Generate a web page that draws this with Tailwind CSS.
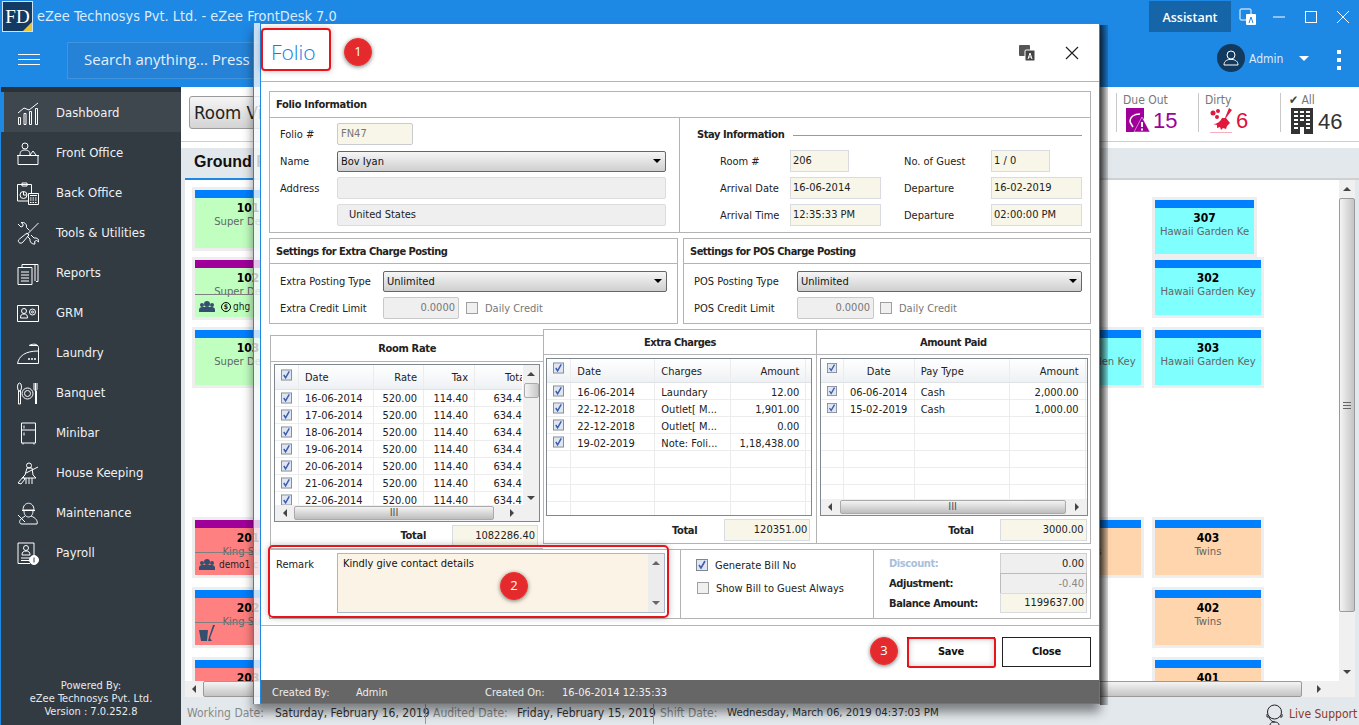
<!DOCTYPE html>
<html lang="en">
<head>
<meta charset="UTF-8">
<title>eZee FrontDesk - Folio</title>
<script src="https://cdn.jsdelivr.net/npm/@tailwindcss/browser@4"></script>
</head>
<body class="relative w-[1359px] h-[725px] overflow-hidden bg-[#e3e8ec] font-['DejaVu_Sans_Condensed','DejaVu_Sans',sans-serif] text-[11px] text-[#111]">

<svg class="hidden">
  <symbol id="chk" viewBox="0 0 12 12"><rect x=".5" y=".5" width="11" height="11" fill="#dfe6f2" stroke="#7f8790"/><path d="M3 6l2 3 4-7" fill="none" stroke="#3b5db0" stroke-width="1.6"/></symbol>
  <symbol id="unchk" viewBox="0 0 12 12"><rect x=".5" y=".5" width="11" height="11" fill="#f0f0f0" stroke="#a0a0a0"/></symbol>
</svg>

<!-- top bar -->
<header class="h-[87px] bg-[#1e88e5] text-white">
  <div class="h-[33px] flex items-center">
    <div class="relative ml-[2px] w-[31px] h-[31px] bg-[#123a63] border border-[#cfe3f5] flex items-center justify-center font-['Liberation_Serif',serif] text-[19px] leading-none overflow-hidden">FD
      <div class="absolute right-0 bottom-0 w-0 h-0 border-l-[9px] border-l-transparent border-b-[9px] border-b-[#e8c53a]"></div>
    </div>
    <span class="ml-[4px] text-[14.4px] text-[#dcebf9] w-[1100px]">eZee Technosys Pvt. Ltd. - eZee FrontDesk 7.0</span>
    <div class="absolute left-[1149px] top-[1px] w-[82px] h-[31px] pt-[3px] bg-[#1565a8] flex items-center justify-center font-['Open_Sans',sans-serif] font-semibold text-[12.5px]">Assistant</div>
    <svg class="absolute left-[1239px] top-[8px] w-[18px] h-[18px]" viewBox="0 0 18 18"><rect x="1" y="1" width="11" height="11" rx="1" fill="none" stroke="#fff"/><rect x="7" y="6" width="10" height="11" rx="1" fill="#fff"/><path d="M10 15l2-6 2 6" fill="none" stroke="#1e88e5"/></svg>
    <svg class="absolute left-[1273px] top-[11px] w-[12px] h-[12px]" viewBox="0 0 12 12"><path d="M0 6h12" stroke="#fff"/></svg>
    <div class="absolute left-[1305px] top-[11px] w-[12px] h-[12px] border border-white"></div>
    <svg class="absolute left-[1337px] top-[11px] w-[12px] h-[12px]" viewBox="0 0 12 12"><path d="M0 0l12 12M12 0L0 12" stroke="#fff"/></svg>
  </div>
  <div class="h-[54px] flex items-center">
    <svg class="ml-[18px] w-[22px] h-[12px]" viewBox="0 0 22 12"><path d="M0 .5h22M0 5.5h22M0 10.5h22" stroke="#fff"/></svg>
    <div class="ml-[27px] w-[200px] h-[37px] pb-[2px] bg-[#2582d6] border border-[#3f95e0] flex items-center pl-[16px] font-['Open_Sans',sans-serif] text-[15px] whitespace-nowrap text-[#e4f0fb]">Search anything... Press</div>
    <div class="absolute left-[1217px] top-[44px] w-[28px] h-[28px] rounded-full bg-[#12395e] flex items-center justify-center">
      <svg class="w-[18px] h-[18px]" viewBox="0 0 18 18" fill="none" stroke="#fff"><circle cx="9" cy="6" r="4"/><path d="M2 16c0-4 3-5 5-5.500h4c2 .5 5 1.500 5 5.500z"/></svg>
    </div>
    <span class="absolute left-[1249px] top-[50px] text-[12px] text-[#dcebf9]">Admin</span>
    <div class="absolute left-[1299px] top-[56px] w-0 h-0 border-x-[5px] border-x-transparent border-t-[5px] border-t-white"></div>
    <div class="absolute left-[1337px] top-[50px] flex flex-col gap-[4px]">
      <i class="block w-[4px] h-[4px] bg-white"></i><i class="block w-[4px] h-[4px] bg-white"></i><i class="block w-[4px] h-[4px] bg-white"></i>
    </div>
  </div>
</header>

<div class="flex h-[638px]">
  <!-- sidebar -->
  <aside class="relative w-[181px] bg-[#323a42] border-l border-[#1e88e5] text-[13px] text-[#eef2f5] [&>a]:pt-[2px]">
    <div class="h-[5px] bg-[#2b3138]"></div>
    <a class="flex items-center h-[40px] -ml-[1px] border-l-4 border-[#1e88e5] bg-[#3e464e] pl-[13px] gap-[17px]">
      <svg class="w-[22px] h-[23px]" viewBox="0 0 22 23" fill="none" stroke="#fff"><path d="M1.500 15.500h2v7h-2zM7 11.500h2v11H7zM12.500 9.500h2v13h-2zM18.500 6.500h2v16h-2zM1 11l6-5 5 2 9-7"/></svg>Dashboard</a>
    <a class="flex items-center h-[40px] pl-[16px] gap-[17px]">
      <svg class="w-[22px] h-[23px]" viewBox="0 0 22 23" fill="none" stroke="#fff"><circle cx="8" cy="4" r="3"/><path d="M3 13c0-4 2-5 5-5s5 1 5 5M13 13l3-4 3 4M1 22.500V13.500h20v9zM0 13.500h22" /></svg>Front Office</a>
    <a class="flex items-center h-[40px] pl-[16px] gap-[17px]">
      <svg class="w-[22px] h-[23px]" viewBox="0 0 22 23" fill="none" stroke="#fff"><path d="M12 19H.5V2.500h14V11M5 1h5v3H5z"/><circle cx="6.500" cy="13" r="3.500"/><path d="M6.500 13V9.500M6.500 13h3"/><path d="M11.500 11.500h10v11h-10zM13 13.500h7" /><path d="M13 16h7M13 18h7M13 20.500h7" stroke-dasharray="1.500 1"/></svg>Back Office</a>
    <a class="flex items-center h-[40px] pl-[16px] gap-[17px]">
      <svg class="w-[22px] h-[23px]" viewBox="0 0 22 23" fill="none" stroke="#fff"><path d="M21.500 1L10 12.500M10 11l2 2-6 7c-1 1.500-3 1.500-4 .5s-1-2.500 .5-3.500z"/><path d="M1 2l3 3 2-1 0-2-2-1.500c3-.5 6 1 5.500 5l3 3M14 13l3 3c3-.5 5 1 5 4l-2.500-1.500-2 1 .5 2.500c-3 .5-5.500-2-5-5L10 14" /></svg>Tools &amp; Utilities</a>
    <a class="flex items-center h-[40px] pl-[16px] gap-[17px]">
      <svg class="w-[22px] h-[23px]" viewBox="0 0 22 23" fill="none" stroke="#fff"><path d="M18 2.500h3v17h-2M5 5V2.500h13V19"/><path d="M1 5.500h14l0 17H1zM4 10h8M4 13h8M4 16h8M4 19h8"/></svg>Reports</a>
    <a class="flex items-center h-[40px] pl-[16px] gap-[17px]">
      <svg class="w-[22px] h-[23px]" viewBox="0 0 22 23" fill="none" stroke="#fff"><path d="M.5 3.500h21v16h-21z"/><circle cx="7" cy="9" r="2.500"/><path d="M3.500 16c0-3 1-4 3.500-4s3.500 1 3.500 4zM13 3.500h0"/><circle cx="15.500" cy="10" r="3"/><circle cx="15.500" cy="10" r="1"/></svg>GRM</a>
    <a class="flex items-center h-[40px] pl-[16px] gap-[17px]">
      <svg class="w-[22px] h-[23px]" viewBox="0 0 22 23" fill="none" stroke="#fff"><path d="M21.500 21.500H.5C2 14 8 9 21.500 9zM12 3.500c4-2 9-2 9.500 2V9M13 3.500h8" /><path d="M11 17h2M14 17h2M17 17h2" stroke-width="1.500"/></svg>Laundry</a>
    <a class="flex items-center h-[40px] pl-[16px] gap-[17px]">
      <svg class="w-[22px] h-[23px]" viewBox="0 0 22 23" fill="none" stroke="#fff"><ellipse cx="2.500" cy="5" rx="2" ry="4"/><path d="M1.500 9h2v13h-2zM17 1v6c0 2 3 2 3 0V1M18.500 1v21M18 9h1.500v13" /><circle cx="10.500" cy="11.500" r="5.500"/><circle cx="10.500" cy="11.500" r="3"/></svg>Banquet</a>
    <a class="flex items-center h-[40px] pl-[16px] gap-[17px]">
      <svg class="w-[22px] h-[23px]" viewBox="0 0 22 23" fill="none" stroke="#fff"><path d="M4.500 1h14v20h-14zM4.500 8h14M7 3.500v3M7 10.500v3M6 21v1.500M17 21v1.500"/></svg>Minibar</a>
    <a class="flex items-center h-[40px] pl-[16px] gap-[17px]">
      <svg class="w-[22px] h-[23px]" viewBox="0 0 22 23" fill="none" stroke="#fff"><circle cx="12" cy="3.500" r="2.500"/><path d="M10 6l-2 7-3 3h14l-3-3-1-7zM21 5L9 11M1 21l5-6 2 2-4 5zM9 16v6M12 16v6M15 16v6"/></svg>House Keeping</a>
    <a class="flex items-center h-[40px] pl-[16px] gap-[17px]">
      <svg class="w-[22px] h-[23px]" viewBox="0 0 22 23" fill="none" stroke="#fff"><path d="M6 8c0-9 11-9 11 0zM5 8.500h13M7 9c0 8 9 8 9 0M8 14l-4 3c-2 2-2 5 1 5h15c1-3-1-6-6-8M1 13l7 7"/></svg>Maintenance</a>
    <a class="flex items-center h-[40px] pl-[16px] gap-[17px]">
      <svg class="w-[22px] h-[23px]" viewBox="0 0 22 23" fill="none" stroke="#fff"><path d="M13 21.500H1V1h16v14"/><circle cx="9" cy="6" r="2.500"/><path d="M5 13c0-3 1.500-4 4-4s4 1 4 4zM4 16h9M4 18.500h8"/><circle cx="17" cy="18" r="4.500" fill="#fff"/><path d="M17 15.500v5" stroke="#323a42"/></svg>Payroll</a>
    <div class="absolute left-0 right-0 top-[592px] text-center text-[11px] leading-[13px] text-[#e6eaee]">Powered By:<br>eZee Technosys Pvt. Ltd.<br>Version : 7.0.252.8</div>
  </aside>

  <!-- main -->
  <main class="w-[1178px] flex flex-col">
    <div class="relative h-[61px] bg-white">
      <div class="h-[55px] border-b border-[#cfcfcf] flex items-start">
        <div class="ml-[8px] mt-[9px] w-[80px] h-[33px] rounded-[3px] border border-[#9a9a9a] bg-linear-to-b from-[#f5f5f5] to-[#d4d4d4] text-[18.5px] leading-[31px] pl-[4px] text-[#222] whitespace-nowrap overflow-hidden">Room View</div>
        <div class="ml-[847px] mt-[6px] pt-[1px] h-[39px] border-l border-[#c8c8c8] w-[82px] pl-[6px] text-[#777] text-[12px] leading-[13px]">Due Out
          <div class="flex items-center gap-[3px] pl-[3px] mt-[1px]">
            <svg class="w-[24px] h-[25px]" viewBox="0 0 24 25"><path d="M0 0h18v10l-4 7-3 7H0z" fill="#a0009a"/><path d="M4 14c0-5 4-8 10-8" fill="none" stroke="#fff" stroke-width="1.500"/><path d="M4 14l3 5" stroke="#fff" stroke-width="1.500"/><path d="M16 9l8 15H8z" fill="#a0009a" stroke="#fff" stroke-width=".5"/><path d="M16 14v5M16 20.500v2" stroke="#fff" stroke-width="2"/></svg>
            <span class="font-['Liberation_Sans',sans-serif] text-[22px] leading-[25px] text-[#a0009a]">15</span>
          </div>
        </div>
        <div class="mt-[6px] pt-[1px] h-[39px] border-l border-[#c8c8c8] w-[82px] pl-[6px] text-[#777] text-[12px] leading-[13px]">Dirty
          <div class="flex items-center gap-[4px] pl-[5px] mt-[1px]">
            <svg class="w-[22px] h-[25px]" viewBox="0 0 22 25" fill="#e0183c"><circle cx="3" cy="5" r="2.500"/><circle cx="8" cy="3" r="2"/><circle cx="7" cy="9" r="2"/><path d="M19 0l3 2-6 8 4 5-3 3-1 3-3-1-2 2-1-3-3 1 0-3-4-1c4 0 7-2 9-6l3 0z"/><path d="M0 24.500h22" stroke="#f4b0bc"/></svg>
            <span class="font-['Liberation_Sans',sans-serif] text-[22px] leading-[25px] text-[#e0103a]">6</span>
          </div>
        </div>
        <div class="mt-[6px] pt-[1px] h-[39px] border-l border-[#c8c8c8] pl-[8px] text-[#777] text-[12px] leading-[13px]"><span class="text-[#444]">&#10004;</span> All
          <div class="flex items-center gap-[5px] pl-[2px] mt-[1px]">
            <svg class="w-[22px] h-[26px]" viewBox="0 0 22 26"><rect width="22" height="26" fill="#333"/><path d="M3 4h4M9 4h4M15 4h4M3 8h4M9 8h4M15 8h4M3 12h4M9 12h4M15 12h4M3 16h4M15 16h4M3 20h4M15 20h4" stroke="#fff" stroke-width="2"/><rect x="9" y="19" width="4" height="7" fill="#fff"/></svg>
            <span class="font-['Liberation_Sans',sans-serif] text-[22px] leading-[25px] text-[#333]">46</span>
          </div>
        </div>
      </div>
    </div>
    <div class="h-[30px] ml-[4px] text-[16px] leading-[28px] font-bold pl-[9px] text-[#111] font-['Liberation_Sans',sans-serif]">Ground Floor</div>
    <div class="ml-[4px] h-[2px] bg-[#d0d0d0]"><div class="w-[70px] h-[2px] bg-[#1e88e5]"></div></div>

    <div class="relative ml-[4px] mr-[4px] h-[501px] bg-white flex overflow-hidden">
      <div class="ml-[10px] mt-[10px] w-[106px] text-center text-[11.2px] leading-[13px] text-[#666]">
        <div class="h-[58px] bg-[#c0ffc0] shadow-[0_0_0_3px_#eee]"><div class="h-[8px] bg-[#007fff]"></div><b class="block mt-[4px] text-[12px] text-black">101</b>Super Deluxe</div>
        <div class="relative mt-[12px] h-[57px] bg-[#c0ffc0] shadow-[0_0_0_3px_#eee]"><div class="h-[8px] bg-[#a0009a]"></div><b class="block mt-[4px] text-[12px] text-black">102</b>Super Deluxe
          <div class="absolute left-0 right-0 top-[34px] h-px bg-[#808080]"></div>
          <div class="absolute left-[4px] top-[40px] flex items-center text-[10px] text-[#222]"><svg class="w-[16px] h-[11px]" viewBox="0 0 16 11" fill="#34506e"><circle cx="8" cy="3" r="3"/><circle cx="3" cy="4" r="2"/><circle cx="13" cy="4" r="2"/><path d="M0 9c0-3 3-3 3-3h10s3 0 3 3v2H0z"/></svg><span class="ml-[6px] w-[10px] h-[10px] rounded-full border border-black text-[7px] leading-[8px] font-bold">$</span><span class="ml-[2px]">ghg</span></div>
        </div>
        <div class="mt-[13px] h-[55px] bg-[#c0ffc0] shadow-[0_0_0_3px_#eee]"><div class="h-[8px] bg-[#007fff]"></div><b class="block mt-[4px] text-[12px] text-black">103</b>Super Deluxe</div>
        <div class="relative mt-[135px] h-[55px] bg-[#ff8080] shadow-[0_0_0_3px_#eee]"><div class="h-[8px] bg-[#a0009a]"></div><b class="block mt-[4px] text-[12px] text-black">201</b>King Suite
          <div class="absolute left-0 right-0 top-[32px] h-px bg-[#808080]"></div>
          <div class="absolute left-[4px] top-[38px] flex items-center text-[10px] text-[#222]"><svg class="w-[16px] h-[11px]" viewBox="0 0 16 11" fill="#34506e"><circle cx="8" cy="3" r="3"/><circle cx="3" cy="4" r="2"/><circle cx="13" cy="4" r="2"/><path d="M0 9c0-3 3-3 3-3h10s3 0 3 3v2H0z"/></svg><span class="ml-[4px]">demo1 c</span></div>
        </div>
        <div class="relative mt-[15px] h-[55px] bg-[#ff8080] shadow-[0_0_0_3px_#eee]"><div class="h-[8px] bg-[#007fff]"></div><b class="block mt-[4px] text-[12px] text-black">202</b>King Suite
          <div class="absolute left-0 right-0 top-[32px] h-px bg-[#808080]"></div>
          <svg class="absolute left-[4px] top-[35px] w-[16px] h-[16px]" viewBox="0 0 16 16" fill="#34506e"><path d="M0 5h9l-1 11H2zM16 0l-5 13 2 3H9l1-4 4-12z"/></svg>
        </div>
        <div class="mt-[15px] h-[55px] bg-[#ff8080] shadow-[0_0_0_3px_#eee]"><div class="h-[8px] bg-[#007fff]"></div><b class="block mt-[4px] text-[12px] text-black">203</b>King Suite</div>
      </div>

      <div class="ml-[734px] mt-[150px] w-[106px] text-center text-[11.2px] leading-[13px] text-[#666]">
        <div class="h-[55px] bg-[#80ffff] shadow-[0_0_0_3px_#eee]"><div class="h-[8px] bg-[#007fff]"></div><b class="block mt-[4px] text-[12px] text-black">304</b>Hawaii Garden Key</div>
        <div class="mt-[135px] h-[55px] bg-[#ffd5ad] shadow-[0_0_0_3px_#eee]"><div class="h-[8px] bg-[#007fff]"></div><b class="block mt-[4px] text-[12px] text-black">404</b>Twins</div>
      </div>

      <div class="ml-[14px] mt-[20px] w-[106px] text-center text-[11.2px] leading-[13px] text-[#666]">
        <div class="w-[99px] h-[54px] bg-[#80ffff] shadow-[0_0_0_3px_#eee] overflow-hidden whitespace-nowrap"><div class="h-[8px] bg-[#007fff]"></div><b class="block mt-[4px] text-[12px] text-black">307</b>Hawaii Garden Ke</div>
        <div class="mt-[6px] h-[55px] bg-[#80ffff] shadow-[0_0_0_3px_#eee]"><div class="h-[8px] bg-[#007fff]"></div><b class="block mt-[4px] text-[12px] text-black">302</b>Hawaii Garden Key</div>
        <div class="mt-[15px] h-[55px] bg-[#80ffff] shadow-[0_0_0_3px_#eee]"><div class="h-[8px] bg-[#007fff]"></div><b class="block mt-[4px] text-[12px] text-black">303</b>Hawaii Garden Key</div>
        <div class="mt-[135px] h-[55px] bg-[#ffd5ad] shadow-[0_0_0_3px_#eee]"><div class="h-[8px] bg-[#007fff]"></div><b class="block mt-[4px] text-[12px] text-black">403</b>Twins</div>
        <div class="mt-[15px] h-[55px] bg-[#ffd5ad] shadow-[0_0_0_3px_#eee]"><div class="h-[8px] bg-[#007fff]"></div><b class="block mt-[4px] text-[12px] text-black">402</b>Twins</div>
        <div class="mt-[15px] h-[55px] bg-[#ffd5ad] shadow-[0_0_0_3px_#eee]"><div class="h-[8px] bg-[#007fff]"></div><b class="block mt-[4px] text-[12px] text-black">401</b>Twins</div>
      </div>

      <!-- rack vertical scrollbar -->
      <div class="absolute right-0 top-0 bottom-0 w-[16px] bg-[#f0f0f0] flex flex-col items-center">
        <div class="h-[18px] flex items-center"><div class="w-0 h-0 border-x-[4px] border-x-transparent border-b-[4px] border-b-[#444]"></div></div>
        <div class="w-[16px] h-[414px] rounded-[2px] border border-[#9a9a9a] bg-linear-to-r from-[#f4f4f4] to-[#c4c4c4] flex items-center justify-center"><div class="w-[8px] h-[7px] border-y border-[#666] bg-[linear-gradient(#666,#666)] bg-no-repeat bg-center bg-[length:8px_1px]"></div></div>
        <div class="mt-auto h-[18px] flex items-center"><div class="w-0 h-0 border-x-[4px] border-x-transparent border-t-[4px] border-t-[#444]"></div></div>
      </div>
    </div>

    <!-- rack horizontal scrollbar -->
    <div class="ml-[4px] mr-[4px] h-[16px] bg-[#f0f0f0] flex items-center">
      <div class="w-[18px] flex justify-center"><div class="w-0 h-0 border-y-[4px] border-y-transparent border-r-[4px] border-r-[#444]"></div></div>
      <div class="w-[1099px] h-[16px] rounded-[2px] border border-[#9a9a9a] bg-linear-to-b from-[#f4f4f4] to-[#c4c4c4]"></div>
      <div class="w-[34px] flex justify-center"><div class="w-0 h-0 border-y-[4px] border-y-transparent border-l-[4px] border-l-[#444]"></div></div>
    </div>

    <!-- status bar -->
    <footer class="relative h-[28px] flex items-center pl-[6px] text-[12px] text-[#333] whitespace-nowrap">
      <span class="w-[88px] pt-[4px] text-[#888]">Working Date:</span><span class="w-[150px] pt-[4px]">Saturday, February 16, 2019</span>
      <span class="w-[92px] pl-[7px] h-[26px] leading-[30px] border-l border-[#999] text-[#888]">Audited Date:</span><span class="w-[136px] pt-[4px]">Friday, February 15, 2019</span>
      <span class="w-[74px] pl-[6px] h-[26px] leading-[30px] border-l border-[#999] text-[#888]">Shift Date:</span><span class="pt-[4px] text-[11.3px]">Wednesday, March 06, 2019 04:37:03 PM</span>
      <svg class="absolute left-[1084px] top-[6px] w-[19px] h-[22px]" viewBox="0 0 19 22" fill="none" stroke="#222"><circle cx="9.500" cy="9" r="7"/><path d="M2 11v3h2M17 11v3h-2M4 14c1 3 3 5 6 5M5 22c0-2 2-3 4.500-3s4.500 1 4.500 3"/></svg>
      <span class="absolute left-[1108px] top-[8px] text-[#8b3a1a]">Live Support</span>
    </footer>
  </main>
</div>

<!-- folio dialog -->
<section class="absolute left-[253px] top-[23px] w-[847px] h-[681px] flex shadow-[0_8px_10px_rgba(0,0,0,0.45)]">
  <div class="w-[8px] bg-[#f4f6f8]/80 border-x border-[#1e88e5]"></div>
  <div class="w-[838px] bg-white border-y border-[#1e88e5] flex flex-col">
    <div class="relative h-[58px] shrink-0 border-b border-[#b4b4b4] pl-[10px] pt-[10px] font-['Open_Sans',sans-serif] font-light text-[21px] leading-[36px] text-[#0f7fe0]">Folio
      <svg class="absolute left-[758px] top-[21px] w-[16px] h-[16px]" viewBox="0 0 16 16"><rect x="0" y="0" width="11" height="11" rx="1" fill="#555"/><rect x="6" y="5" width="10" height="11" rx="1" fill="#444" stroke="#fff"/><path d="M9 14l2-6 2 6M10 12h2" fill="none" stroke="#fff"/></svg>
      <svg class="absolute left-[804px] top-[22px] w-[14px] h-[14px]" viewBox="0 0 14 14"><path d="M1 1l12 12M13 1L1 13" stroke="#222" stroke-width="1.200"/></svg>
    </div>

    <div class="pl-[8px] pr-[8px] pt-[9px] text-[#222]">
      <!-- folio information -->
      <div class="h-[142px] border border-[#b4b4b4]">
        <div class="h-[26px] border-b border-[#b4b4b4] pl-[6px] leading-[26px] font-bold tracking-[-0.3px]">Folio Information</div>
        <div class="flex h-[114px]">
          <div class="w-[410px] border-r border-[#b4b4b4] pl-[10px] pt-[5px] grid grid-cols-[57px_329px] auto-rows-[22px] gap-y-[5px] items-center [&>span]:pt-[2px]">
            <span>Folio #</span><div class="w-[76px] h-[22px] border border-[#c8ccd0] rounded-[2px] bg-[#f7f6e8] text-[#777] pl-[3px] leading-[20px]">FN47</div>
            <span>Name</span><div class="h-[21px] border border-[#666] rounded-[2px] bg-linear-to-b from-[#f6f6f6] to-[#cfcfcf] pl-[3px] leading-[19px] relative text-[#111]">Bov Iyan<i class="absolute right-[4px] top-[7px] w-0 h-0 border-x-[4px] border-x-transparent border-t-[4px] border-t-black"></i></div>
            <span>Address</span><div class="h-[22px] border border-[#dcdcdc] rounded-[2px] bg-[#efefef]"></div>
            <span></span><div class="h-[22px] border border-[#dcdcdc] rounded-[2px] bg-[#efefef] pl-[11px] leading-[20px]">United States</div>
          </div>
          <div class="w-[409px] pl-[17px] pt-[5px]">
            <div class="h-[22px] pt-[2px] flex items-center font-bold tracking-[-0.4px]">Stay Information<div class="ml-[9px] w-[289px] h-px bg-[#999]"></div></div>
            <div class="mt-[5px] pl-[23px] grid grid-cols-[70px_114px_87px_92px] auto-rows-[22px] gap-y-[5px] items-center [&>span]:pt-[2px]">
              <span>Room #</span><div class="w-[59px] h-[22px] border border-[#d8dce0] bg-[#f7f6e8] pl-[2px] leading-[20px]">206</div><span>No. of Guest</span><div class="w-[59px] h-[22px] border border-[#d8dce0] bg-[#f7f6e8] pl-[2px] leading-[20px]">1 / 0</div>
              <span>Arrival Date</span><div class="w-[91px] h-[22px] border border-[#d8dce0] bg-[#f7f6e8] pl-[2px] leading-[20px]">16-06-2014</div><span>Departure</span><div class="w-[91px] h-[22px] border border-[#d8dce0] bg-[#f7f6e8] pl-[2px] leading-[20px]">16-02-2019</div>
              <span>Arrival Time</span><div class="w-[91px] h-[22px] border border-[#d8dce0] bg-[#f7f6e8] pl-[2px] leading-[20px]">12:35:33 PM</div><span>Departure</span><div class="w-[91px] h-[22px] border border-[#d8dce0] bg-[#f7f6e8] pl-[2px] leading-[20px]">02:00:00 PM</div>
            </div>
          </div>
        </div>
      </div>

      <!-- posting settings -->
      <div class="mt-[5px] flex justify-between">
        <div class="w-[409px] h-[86px] border border-[#b4b4b4]">
          <div class="h-[25px] border-b border-[#b4b4b4] pl-[6px] leading-[25px] font-bold tracking-[-0.5px]">Settings for Extra Charge Posting</div>
          <div class="pl-[10px] pt-[6px] grid grid-cols-[103px_284px] auto-rows-[22px] gap-y-[5px] items-center [&>span]:pt-[2px]">
            <span>Extra Posting Type</span><div class="h-[21px] border border-[#666] rounded-[2px] bg-linear-to-b from-[#f6f6f6] to-[#cfcfcf] pl-[3px] leading-[19px] relative text-[#111]">Unlimited<i class="absolute right-[4px] top-[7px] w-0 h-0 border-x-[4px] border-x-transparent border-t-[4px] border-t-black"></i></div>
            <span>Extra Credit Limit</span><div class="flex items-center text-[#777]"><div class="w-[76px] h-[22px] border border-[#c8c8c8] rounded-[2px] bg-[#efefef] text-right pr-[3px] leading-[20px]">0.0000</div><svg class="ml-[7px] w-[12px] h-[12px]"><use href="#unchk"/></svg><span class="ml-[7px] pt-[2px]">Daily Credit</span></div>
          </div>
        </div>
        <div class="w-[408px] h-[86px] border border-[#b4b4b4]">
          <div class="h-[25px] border-b border-[#b4b4b4] pl-[6px] leading-[25px] font-bold tracking-[-0.5px]">Settings for POS Charge Posting</div>
          <div class="pl-[10px] pt-[6px] grid grid-cols-[103px_285px] auto-rows-[22px] gap-y-[5px] items-center [&>span]:pt-[2px]">
            <span>POS Posting Type</span><div class="h-[21px] border border-[#666] rounded-[2px] bg-linear-to-b from-[#f6f6f6] to-[#cfcfcf] pl-[3px] leading-[19px] relative text-[#111]">Unlimited<i class="absolute right-[4px] top-[7px] w-0 h-0 border-x-[4px] border-x-transparent border-t-[4px] border-t-black"></i></div>
            <span>POS Credit Limit</span><div class="flex items-center text-[#777]"><div class="w-[77px] h-[22px] border border-[#c8c8c8] rounded-[2px] bg-[#efefef] text-right pr-[3px] leading-[20px]">0.0000</div><svg class="ml-[6px] w-[12px] h-[12px]"><use href="#unchk"/></svg><span class="ml-[7px] pt-[2px]">Daily Credit</span></div>
          </div>
        </div>
      </div>

      <!-- rate, charges, paid -->
      <div class="flex h-[220px] mt-[5px]">
        <div class="ml-[1px] w-[274px] mt-[6px] h-[214px] border border-[#b4b4b4] border-r-0">
          <div class="h-[26px] border-b border-[#b4b4b4] text-center leading-[26px] font-bold tracking-[-0.3px]">Room Rate</div>
          <div class="relative ml-[3px] mt-[2px] w-[266px] h-[158px] border border-[#7f8790] overflow-hidden">
            <div id="rateRows" class="w-[247px] h-[140px] overflow-hidden"></div>
            <div class="absolute right-0 top-0 w-[16px] h-[140px] bg-[#f0f0f0] flex flex-col items-center">
              <div class="h-[18px] flex items-center"><div class="w-0 h-0 border-x-[4px] border-x-transparent border-b-[4px] border-b-[#444]"></div></div>
              <div class="w-[15px] h-[15px] border border-[#aaa] rounded-[2px] bg-linear-to-r from-[#f4f4f4] to-[#c8c8c8]"></div>
              <div class="mt-auto h-[14px] flex items-center"><div class="w-0 h-0 border-x-[4px] border-x-transparent border-t-[4px] border-t-[#444]"></div></div>
            </div>
            <div class="flex items-center h-[16px] bg-[#f0f0f0]">
              <div class="w-[19px] flex justify-center"><div class="w-0 h-0 border-y-[4px] border-y-transparent border-r-[4px] border-r-[#444]"></div></div>
              <div class="w-[200px] h-[14px] border border-[#aaa] rounded-[2px] bg-linear-to-b from-[#f4f4f4] to-[#bdbdbd] text-center leading-[11px] text-[#555]">III</div>
              <div class="ml-[16px] w-0 h-0 border-y-[4px] border-y-transparent border-l-[4px] border-l-[#444]"></div>
            </div>
          </div>
          <div class="flex mt-[3px] items-start">
            <b class="w-[155px] text-right pt-[3px] tracking-[-0.3px]">Total</b>
            <div class="ml-[26px] w-[86px] h-[22px] border border-[#d8dce0] bg-[#f7f6e8] text-right pr-[2px] leading-[20px]">1082286.40</div>
          </div>
        </div>

        <div class="w-[273px] h-[215px] border border-[#b4b4b4] border-r-0">
          <div class="h-[25px] border-b border-[#b4b4b4] text-center leading-[25px] font-bold tracking-[-0.5px]">Extra Charges</div>
          <div class="ml-[2px] mt-[3px] w-[266px] h-[158px] border border-[#7f8790] overflow-hidden"><div id="extraRows"></div></div>
          <div class="flex mt-[3px] items-start">
            <b class="w-[153px] text-right pt-[4px] tracking-[-0.3px]">Total</b>
            <div class="ml-[27px] w-[86px] h-[22px] border border-[#d8dce0] bg-[#f7f6e8] text-right pr-[2px] leading-[20px]">120351.00</div>
          </div>
        </div>

        <div class="w-[276px] h-[215px] border border-[#b4b4b4]">
          <div class="h-[25px] border-b border-[#b4b4b4] text-center leading-[25px] font-bold tracking-[-0.4px]">Amount Paid</div>
          <div class="ml-[3px] mt-[3px] w-[268px] h-[158px] border border-[#7f8790] overflow-hidden">
            <div id="paidRows" class="h-[140px] overflow-hidden"></div>
            <div class="flex items-center h-[16px] bg-[#f0f0f0]">
              <div class="w-[19px] flex justify-center"><div class="w-0 h-0 border-y-[4px] border-y-transparent border-r-[4px] border-r-[#444]"></div></div>
              <div class="w-[226px] h-[14px] border border-[#aaa] rounded-[2px] bg-linear-to-b from-[#f4f4f4] to-[#bdbdbd] text-center leading-[11px] text-[#555]">III</div>
              <div class="ml-[9px] w-0 h-0 border-y-[4px] border-y-transparent border-l-[4px] border-l-[#444]"></div>
            </div>
          </div>
          <div class="flex mt-[3px] items-start">
            <b class="w-[157px] text-right pt-[4px] tracking-[-0.3px]">Total</b>
            <div class="ml-[26px] w-[87px] h-[22px] border border-[#d8dce0] bg-[#f7f6e8] text-right pr-[2px] leading-[20px]">3000.00</div>
          </div>
        </div>
      </div>

      <!-- remark and totals -->
      <div class="flex h-[70px] border border-[#b4b4b4]">
        <div class="w-[411px] border-r border-[#b4b4b4] flex pl-[6px] pt-[3px]">
          <span class="w-[61px] pt-[4px]">Remark</span>
          <div class="relative w-[328px] h-[60px] border border-[#a8b8c8] bg-[#fbf3e5] pl-[5px] pt-[2px] text-[#111]">Kindly give contact details
            <div class="absolute right-0 top-0 bottom-0 w-[16px] bg-[#ececec] flex flex-col items-center justify-between py-[7px]">
              <div class="w-0 h-0 border-x-[4px] border-x-transparent border-b-[4px] border-b-[#666]"></div>
              <div class="w-0 h-0 border-x-[4px] border-x-transparent border-t-[4px] border-t-[#666]"></div>
            </div>
          </div>
        </div>
        <div class="w-[193px] border-r border-[#b4b4b4] pl-[15px] pt-[9px]">
          <div class="flex items-center h-[12px]"><svg class="w-[12px] h-[12px]"><use href="#chk"/></svg><span class="ml-[7px] pt-[2px]">Generate Bill No</span></div>
          <div class="flex items-center h-[12px] mt-[11px] ml-[1px]"><svg class="w-[12px] h-[12px]"><use href="#unchk"/></svg><span class="ml-[7px] pt-[2px]">Show Bill to Guest Always</span></div>
        </div>
        <div class="w-[215px] pl-[15px] pt-[3px] grid grid-cols-[111px_87px] auto-rows-[20px] items-center font-bold [&>span]:pt-[3px] [&>span]:tracking-[-0.4px]">
          <span class="text-[#a8c0dc]">Discount:</span><div class="h-[21px] border border-[#d0d0d0] bg-[#efefef] text-right pr-[2px] leading-[19px] font-normal">0.00</div>
          <span>Adjustment:</span><div class="h-[21px] border border-[#bbb] bg-[#efefef] text-right pr-[2px] leading-[19px] font-normal text-[#888]">-0.40</div>
          <span>Balance Amount:</span><div class="h-[20px] border border-[#d8dce0] bg-[#f7f6e8] text-right pr-[2px] leading-[18px] font-normal">1199637.00</div>
        </div>
      </div>
    </div>

    <div class="mt-[6px] border-t border-[#b4b4b4] flex justify-end gap-[7px] pr-[8px] pt-[11px] h-[55px] font-bold tracking-[-0.2px]">
      <button class="w-[88px] h-[30px] border border-[#222] bg-white">Save</button>
      <button class="w-[89px] h-[30px] border border-[#222] bg-white">Close</button>
    </div>
    <div class="mt-auto h-[23px] bg-[#666] text-[#eee] flex items-center pl-[11px] pt-[4px] whitespace-nowrap">
      <span class="w-[84px]">Created By:</span><span class="w-[129px]">Admin</span><span class="w-[77px]">Created On:</span><span>16-06-2014 12:35:33</span>
    </div>
  </div>
  <div class="w-px bg-[#1e88e5]"></div>
</section>
<div class="absolute left-[1100px] top-[25px] w-[8px] h-[680px] bg-linear-to-r from-black/65 to-black/15"></div>

<!-- callouts -->
<div class="absolute left-[261px] top-[28px] w-[70px] h-[43px] rounded-[4px] border-2 border-[#e8141c] shadow-[0_0_6px_rgba(0,0,0,0.25)]"></div>
<div class="absolute left-[268px] top-[545px] w-[401px] h-[73px] rounded-[5px] border-2 border-[#e8141c] shadow-[0_0_6px_rgba(0,0,0,0.25)]"></div>
<div class="absolute left-[907px] top-[637px] w-[89px] h-[31px] rounded-[3px] border-2 border-[#e8141c] shadow-[inset_0_0_6px_rgba(0,0,0,0.2)]"></div>
<div class="absolute left-[344px] top-[38px] w-[28px] h-[28px] rounded-full bg-[#e52a2d] border border-[#f03030] shadow-[0_1px_4px_rgba(0,0,0,0.5)] flex items-center justify-center text-white font-['Open_Sans',sans-serif] text-[13px]">1</div>
<div class="absolute left-[500px] top-[572px] w-[28px] h-[28px] rounded-full bg-[#e52a2d] border border-[#f03030] shadow-[0_1px_4px_rgba(0,0,0,0.5)] flex items-center justify-center text-white font-['Open_Sans',sans-serif] text-[13px]">2</div>
<div class="absolute left-[870px] top-[637px] w-[28px] h-[28px] rounded-full bg-[#e52a2d] border border-[#f03030] shadow-[0_1px_4px_rgba(0,0,0,0.5)] flex items-center justify-center text-white font-['Open_Sans',sans-serif] text-[13px]">3</div>

<script>
  const cellBase = 'h-full flex items-center border-r border-[#ececec] px-[6px] overflow-hidden whitespace-nowrap';
  const box = (on, cls = '') => `<svg class="w-[12px] h-[12px] ${cls}"><use href="#${on ? 'chk' : 'unchk'}"/></svg>`;

  // aligns: one entry per column after the checkbox, pad: top padding of the text cells
  function buildGrid(el, cols, headH, pad, headers, aligns, rows, rowCount) {
    const cell = (txt, a) => `<div class="${cellBase} ${pad} ${a === 'r' ? 'justify-end' : a === 'c' ? 'justify-center' : ''}">${txt}</div>`;
    let html = `<div class="grid ${cols} ${headH} bg-linear-to-b from-white to-[#eef1f4] border-b border-[#dfe3e6]">`
      + `<div class="${cellBase} justify-center">${box(true, '-mt-[5px]')}</div>`
      + headers.map((h, i) => cell(h, aligns[i])).join('') + '</div>';
    for (let i = 0; i < rowCount; i++) {
      const r = rows[i];
      html += `<div class="grid ${cols} h-[17px] border-b border-[#ececec]">`
        + `<div class="${cellBase} justify-center">${r ? box(true) : ''}</div>`
        + headers.map((h, j) => cell(r ? r[j] : '', aligns[j])).join('') + '</div>';
    }
    el.innerHTML = html;
  }

  const rate = [];
  for (let d = 16; d <= 22; d++) rate.push([d + '-06-2014', '520.00', '114.40', '634.40']);
  buildGrid(document.getElementById('rateRows'), 'grid-cols-[24px_75px_50px_51px_60px]', 'h-[25px]', 'pt-[2px]',
    ['Date', 'Rate', 'Tax', 'Total'], ['l', 'r', 'r', 'r'], rate, 7);

  buildGrid(document.getElementById('extraRows'), 'grid-cols-[24px_84px_76px_75px_5px]', 'h-[24px]', 'pt-[4px]',
    ['Date', 'Charges', 'Amount', ''], ['l', 'l', 'r', 'l'], [
      ['16-06-2014', 'Laundary', '12.00', ''],
      ['22-12-2018', 'Outlet[ M...', '1,901.00', ''],
      ['22-12-2018', 'Outlet[ M...', '0.00', ''],
      ['19-02-2019', 'Note: Foli...', '1,18,438.00', '']
    ], 8);

  buildGrid(document.getElementById('paidRows'), 'grid-cols-[23px_71px_95px_76px]', 'h-[24px]', 'pt-[4px]',
    ['Date', 'Pay Type', 'Amount'], ['c', 'l', 'r'], [
      ['06-06-2014', 'Cash', '2,000.00'],
      ['15-02-2019', 'Cash', '1,000.00']
    ], 7);
</script>
</body>
</html>
